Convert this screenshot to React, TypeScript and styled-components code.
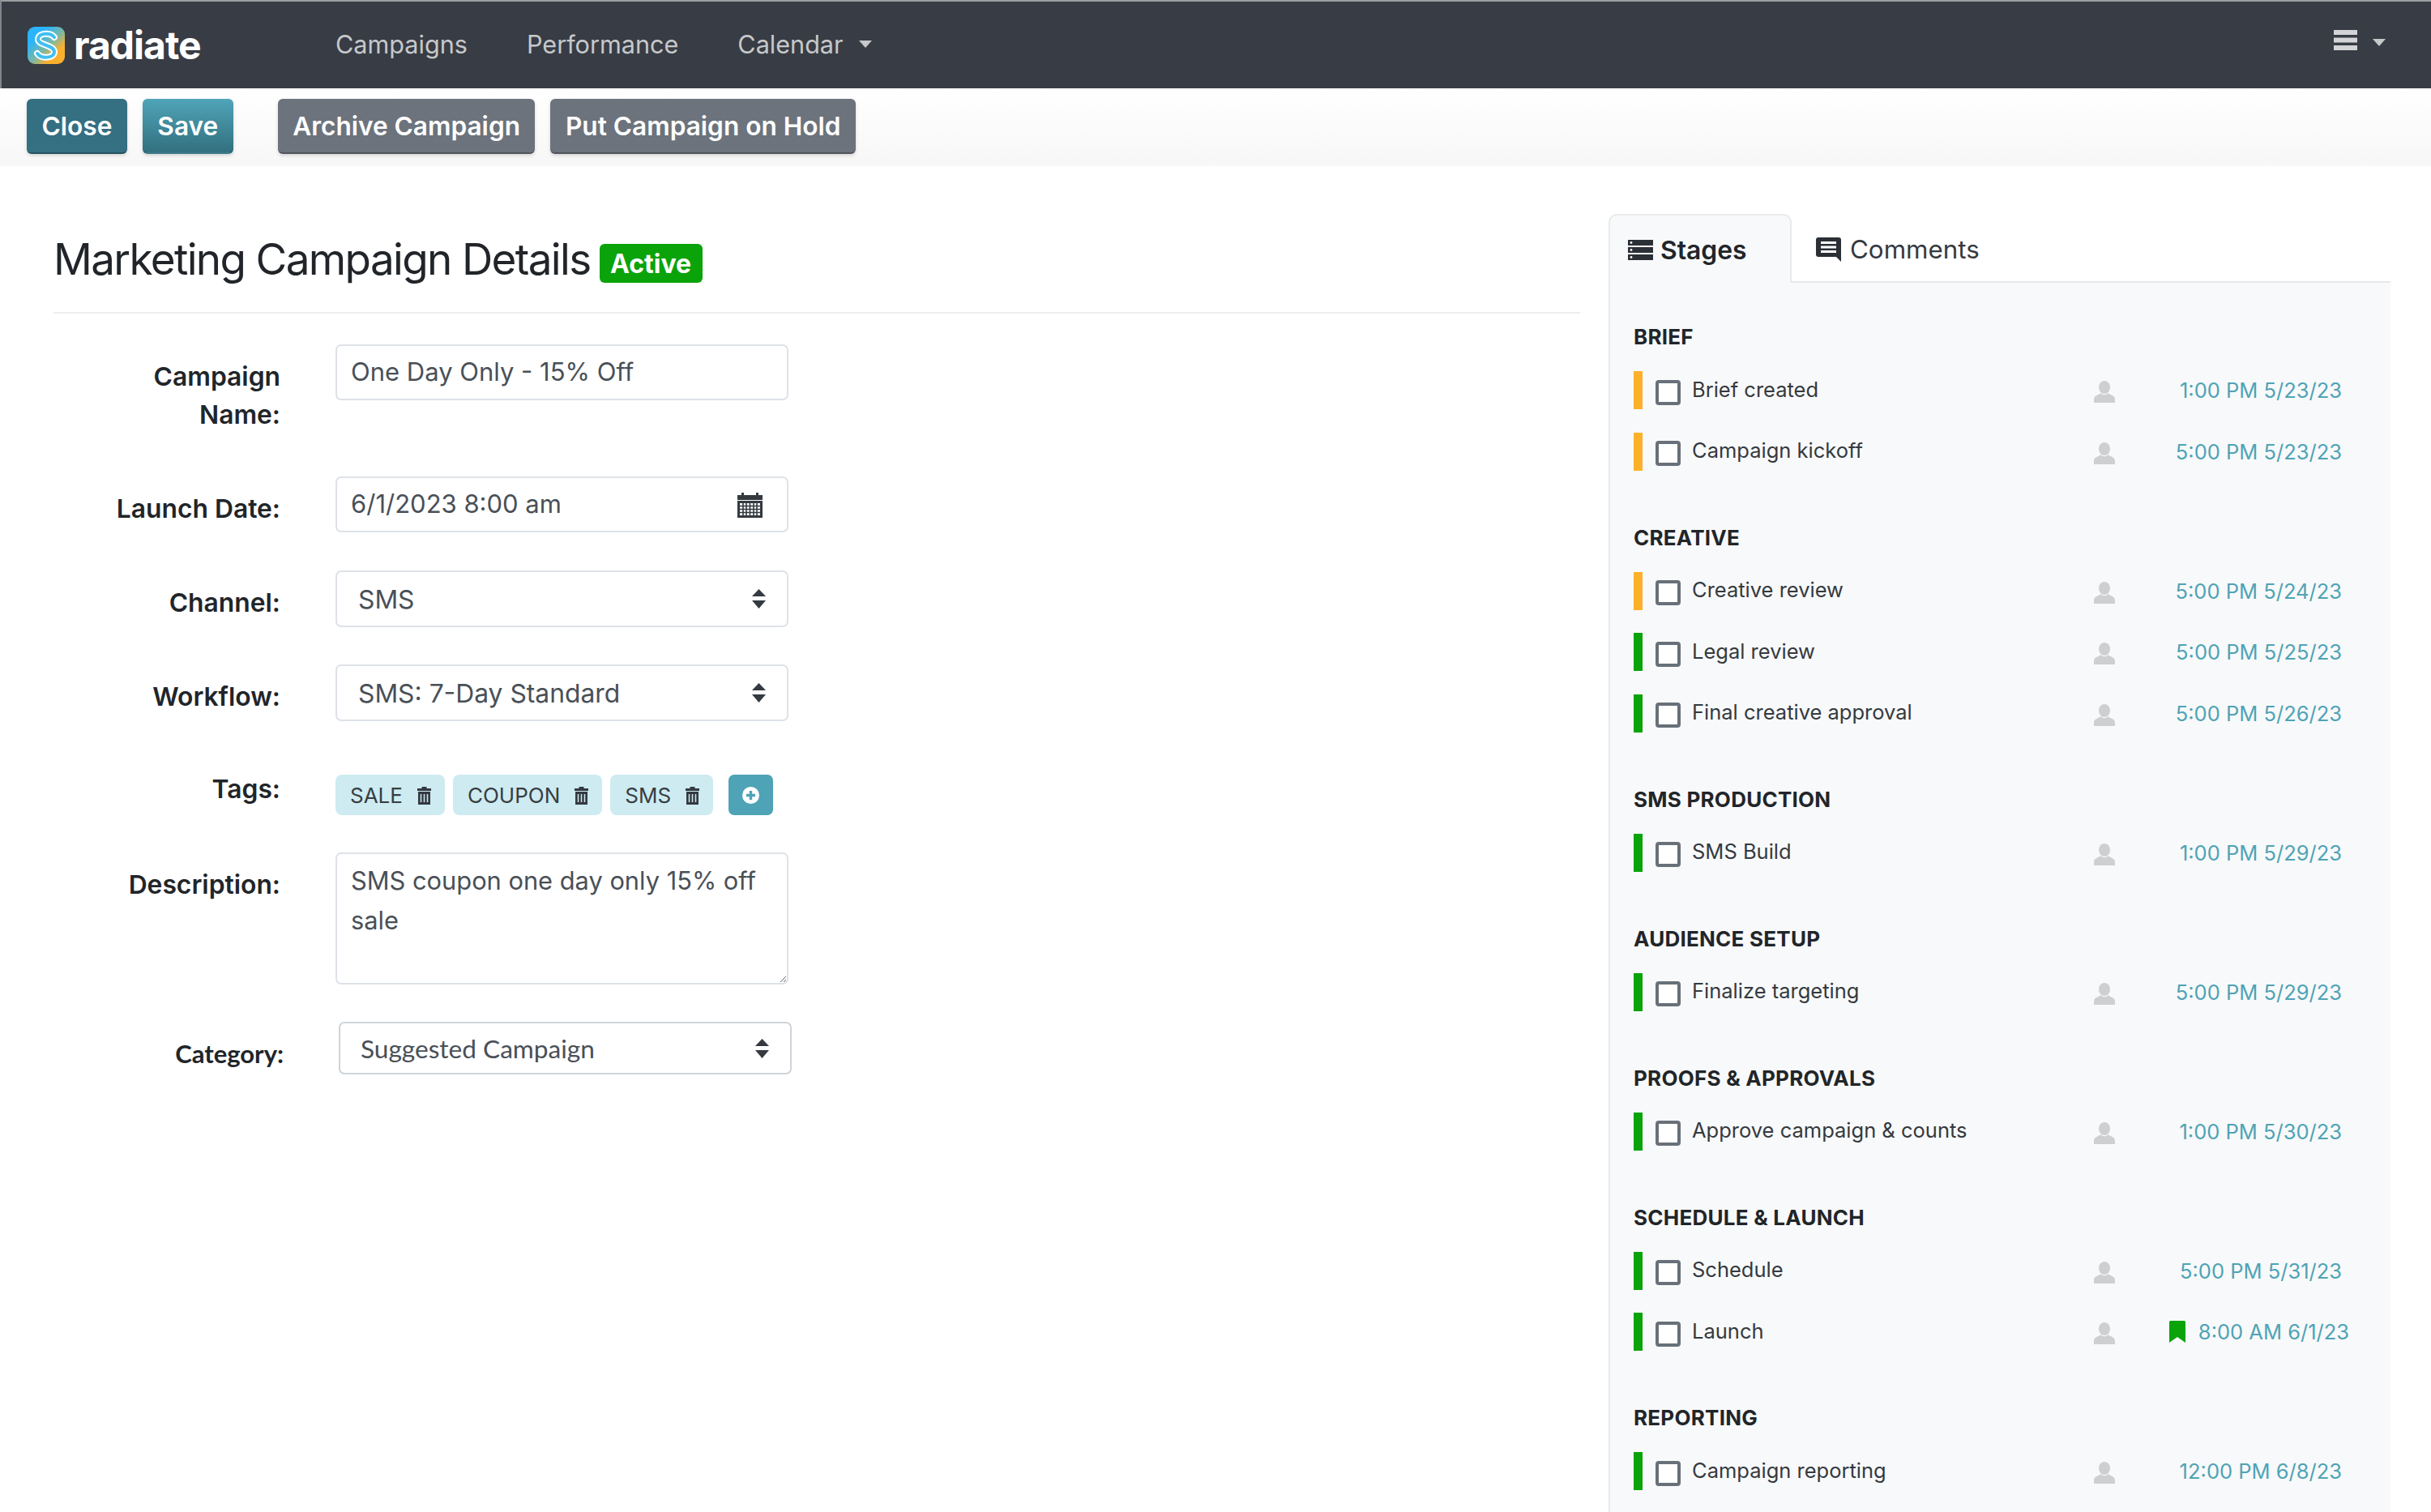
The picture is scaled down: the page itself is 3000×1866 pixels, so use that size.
import React from 'react';
import styled, { createGlobalStyle } from 'styled-components';

const FONT = `Inter, "Liberation Sans", sans-serif`;

const GlobalStyle = createGlobalStyle`
  html, body {
    margin: 0;
    padding: 0;
    height: 1866px;
    overflow: hidden;
    background: #fff;
    font-family: ${FONT};
    color: #212529;
  }
  * { box-sizing: border-box; }
`;

const Page = styled.div`
  width: 3000px;
  height: 1866px;
  display: flex;
  flex-direction: column;
  overflow: hidden;
`;

// top nav
const Navbar = styled.nav`
  height: 109px;
  flex: none;
  display: flex;
  align-items: center;
  background: #383c44;
  border-top: 2px solid #9a9da1;
  border-left: 2px solid #80848a;
  padding-left: 32px;
  padding-right: 56px;
`;

const Brand = styled.div`
  width: 380px;
  display: flex;
  align-items: center;
  gap: 11px;
  color: #fff;
  font-size: 48px;
  font-weight: 700;
  letter-spacing: -1px;
  line-height: 46px;
`;

const NavLinks = styled.div`
  display: flex;
  gap: 73px;
  flex: 1;
  margin-top: -2px;
`;

const NavLink = styled.a`
  color: #c6c8ca;
  font-size: 30.6px;
  display: flex;
  align-items: center;
  gap: 19px;
`;

const Caret = styled.span`
  width: 0;
  height: 0;
  border-left: 8.5px solid transparent;
  border-right: 8.5px solid transparent;
  border-top: 9px solid #c6c8ca;
`;

const NavMenu = styled.div`
  display: flex;
  align-items: center;
  gap: 19px;
  margin-top: -6px;

  svg {
    margin-top: -7px;
  }
`;

// action bar
const Toolbar = styled.div`
  height: 96px;
  flex: none;
  display: flex;
  gap: 19px;
  padding: 13px 33px 15px;
  background: linear-gradient(#ffffff, #f7f7f7);
`;

const Button = styled.button<{ $tone: 'dark' | 'teal' | 'gray'; $split?: boolean }>`
  height: 68px;
  padding: 0 18.5px;
  margin-left: ${p => (p.$split ? '36px' : '0')};
  border: none;
  border-bottom: 2px solid rgba(0, 0, 0, 0.25);
  border-radius: 6px;
  color: #fff;
  font-family: ${FONT};
  font-size: 31.6px;
  font-weight: 600;
  box-shadow: 0 2px 4px rgba(0, 0, 0, 0.15);
  background: ${p =>
    p.$tone === 'dark' ? '#346f82' : p.$tone === 'teal' ? 'linear-gradient(#50a4b8, #32707f)' : '#6c737c'};
`;

const Main = styled.main`
  flex: 1;
  display: flex;
  gap: 35px;
  padding-left: 66px;
  min-height: 0;
`;

const Details = styled.section`
  width: 1884px;
  flex: none;
  padding-top: 85px;
`;

const TitleRow = styled.div`
  height: 97px;
  padding-bottom: 33px;
  display: flex;
  align-items: center;
  border-bottom: 2px solid #eceef0;
  margin-bottom: 38px;
`;

const Title = styled.h1`
  margin: -2px 0 0;
  font-size: 53px;
  font-weight: 400;
  letter-spacing: -1.65px;
  color: #212529;
`;

const ActiveBadge = styled.span`
  margin-left: 11px;
  margin-top: 8px;
  width: 127px;
  height: 48px;
  display: flex;
  align-items: center;
  justify-content: center;
  border-radius: 6px;
  background: #0aa30a;
  color: #fff;
  font-size: 32px;
  font-weight: 700;
`;

// form
const FormRow = styled.div<{ $shift?: boolean; $tags?: boolean }>`
  display: grid;
  grid-template-columns: 280px 559px;
  column-gap: 68px;
  margin-top: ${p => (p.$tags ? '66px' : '0')};
  margin-bottom: 46px;
  margin-left: ${p => (p.$shift ? '4px' : '0')};
  align-items: start;
`;

const Label = styled.label<{ $tight?: boolean; $alt?: boolean }>`
  text-align: right;
  font-family: ${p => (p.$alt ? 'Lato, sans-serif' : FONT)};
  font-size: ${p => (p.$alt ? '31px' : '31.8px')};
  font-weight: ${p => (p.$alt ? 700 : 600)};
  line-height: ${p => (p.$tight ? '36px' : '47px')};
  color: #212529;
  padding: ${p => (p.$tight ? '0 0 0 60px' : '16px 0 7px 60px')};
`;

const FieldWrap = styled.div`
  position: relative;
`;

const TextInput = styled.input`
  display: block;
  width: 100%;
  height: 69px;
  padding: 0 17px 2px;
  border: 2px solid #dee2e8;
  border-radius: 7px;
  font-family: ${FONT};
  font-size: 31px;
  color: #495057;
  background: #fff;
  outline: none;
`;

const SelectField = styled.select<{ $alt?: boolean }>`
  display: block;
  width: 100%;
  height: ${p => (p.$alt ? '65px' : '70px')};
  padding: 0 0 0 ${p => (p.$alt ? '25px' : '26px')};
  appearance: none;
  border: 2px solid ${p => (p.$alt ? '#ced4da' : '#dee2e8')};
  border-radius: 7px;
  font-family: ${p => (p.$alt ? 'Lato, sans-serif' : FONT)};
  font-size: ${p => (p.$alt ? '31.6px' : '31.8px')};
  color: #495057;
  background: #fff;
  outline: none;
`;

const TextArea = styled.textarea`
  display: block;
  width: 100%;
  height: 163px;
  padding: 8px 17px;
  border: 2px solid #dee2e8;
  border-radius: 7px;
  font-family: ${FONT};
  font-size: 30.8px;
  line-height: 49px;
  color: #495057;
  background: #fff;
  outline: none;
  resize: vertical;
`;

const FieldIcon = styled.span<{ $right: number }>`
  position: absolute;
  top: 50%;
  right: ${p => p.$right}px;
  transform: translateY(-50%);
  display: flex;
`;

const TagList = styled.div`
  display: flex;
  align-items: center;
  gap: 10px;
`;

const Tag = styled.span`
  height: 50px;
  padding: 0 17px 0 18px;
  display: flex;
  align-items: center;
  gap: 18px;
  background: #cdebf1;
  border-radius: 8px;
  color: #383d41;
  font-size: 26px;
`;

const AddTag = styled.button`
  width: 55px;
  height: 50px;
  margin-left: 9px;
  padding: 0;
  display: flex;
  align-items: center;
  justify-content: center;
  border: none;
  border-radius: 7px;
  background: #4fa3b6;
`;

// right panel
const StagesColumn = styled.aside`
  width: 965px;
  flex: none;
  padding-top: 59px;
  display: flex;
  flex-direction: column;
`;

const Tabs = styled.div`
  display: flex;
  height: 85px;
  flex: none;
  border-bottom: 2px solid #e6e8ea;
`;

const Tab = styled.div<{ $active?: boolean }>`
  height: 85px;
  display: flex;
  align-items: center;
  gap: ${p => (p.$active ? '9px' : '11px')};
  padding-top: 2px;
  font-size: ${p => (p.$active ? '31.8px' : '31.3px')};
  font-weight: ${p => (p.$active ? 600 : 400)};
  color: ${p => (p.$active ? '#212529' : '#343a40')};
  width: ${p => (p.$active ? '226px' : 'auto')};
  padding-left: ${p => (p.$active ? '22px' : '30px')};
  background: ${p => (p.$active ? '#f8f9fa' : 'transparent')};
  border: ${p => (p.$active ? '2px solid #e8eaec' : 'none')};
  border-bottom: none;
  border-radius: 10px 10px 0 0;
  margin-bottom: -2px;
`;

const Panel = styled.div`
  flex: 1;
  background: #f8f9fa;
  border-left: 2px solid #e6e8ea;
  padding: 49px 60px 0 29px;
`;

const StageGroup = styled.div`
  margin-bottom: 65px;
`;

const GroupTitle = styled.h3`
  margin: 0 0 24px;
  height: 36px;
  line-height: 36px;
  font-size: 26px;
  font-weight: 700;
  letter-spacing: 0.25px;
  color: #212529;
`;

const StageRow = styled.div`
  display: flex;
  align-items: center;
  height: 47px;
  margin-bottom: 28.6px;
`;

const StatusBar = styled.span<{ $state: 'warn' | 'ok' }>`
  width: 11px;
  height: 47px;
  flex: none;
  background: ${p => (p.$state === 'warn' ? '#fdb12b' : '#0aa30a')};
`;

const Check = styled.input`
  appearance: none;
  width: 31px;
  height: 31px;
  flex: none;
  margin: 5px 14px 0 16px;
  border: 4px solid #687079;
  border-radius: 4px;
  background: #fff;
`;

const StageName = styled.span`
  flex: 1;
  font-size: 25.5px;
  color: #343a40;
  margin-top: -3px;
`;

const Owner = styled.span`
  display: flex;
  flex: none;
  margin-top: 4px;
`;

const Due = styled.span<{ $flag?: boolean }>`
  width: ${p => (p.$flag ? '289px' : '280px')};
  flex: none;
  display: flex;
  align-items: center;
  justify-content: flex-end;
  gap: 16px;
  margin-right: ${p => (p.$flag ? '-9px' : '0')};
  font-size: 25.5px;
  color: #4fa3b6;
`;

// drawn icons
const LogoMark = () => (
  <svg width="46" height="46" viewBox="0 0 46 46">
    <defs>
      <linearGradient id="logoFill" x1="0.1" y1="0.1" x2="0.9" y2="0.9">
        <stop offset="0.2" stopColor="#29b4fb" />
        <stop offset="0.55" stopColor="#7fb8a0" />
        <stop offset="0.8" stopColor="#fbb02d" />
      </linearGradient>
    </defs>
    <rect width="46" height="46" rx="9" fill="url(#logoFill)" />
    <path
      d="M33 13 C29 7 14 7 13 15 C12 23 33 22 33 31 C33 39 17 40 12 33"
      fill="none"
      stroke="#fff"
      strokeWidth="8"
      strokeLinecap="round"
    />
    <path
      d="M33 13 C29 7 14 7 13 15 C12 23 33 22 33 31 C33 39 17 40 12 33"
      fill="none"
      stroke="#3fc0f2"
      strokeWidth="4"
      strokeLinecap="round"
    />
  </svg>
);

const BarsIcon = () => (
  <svg width="29" height="25" viewBox="0 0 29 25" fill="#d2d4d6">
    <rect y="0" width="29" height="6" />
    <rect y="9.5" width="29" height="6" />
    <rect y="19" width="29" height="6" />
  </svg>
);

const CalendarIcon = () => (
  <svg width="31" height="32" viewBox="0 0 31 32">
    <path d="M0 4h5V1h3v3h15V1h3v3h5v6H0z" fill="#343a40" />
    <path d="M0 11h31v21H0z" fill="#343a40" />
    <path d="M3 14h25v15H3z" fill="#fff" />
    <path
      d="M3 17.5h25M3 21.5h25M3 25.5h25M7 14v15M11 14v15M15.5 14v15M20 14v15M24 14v15"
      stroke="#343a40"
      strokeWidth="1.6"
    />
  </svg>
);

const SortArrows = () => (
  <svg width="17" height="24" viewBox="0 0 17 24" fill="#343a40">
    <path d="M8.5 0 L17 9 H0 Z" />
    <path d="M8.5 24 L0 14 H17 Z" />
  </svg>
);

const TrashIcon = () => (
  <svg width="17" height="23" viewBox="0 0 17 23">
    <path d="M5.5 3V1h6v2h5.5v3H0V3z" fill="#343a40" />
    <path d="M1 7h15v16H1z" fill="#343a40" />
    <path d="M4.5 10v10M8.5 10v10M12.5 10v10" stroke="#cdebf1" strokeWidth="1.5" />
  </svg>
);

const PlusCircle = () => (
  <svg width="21" height="21" viewBox="0 0 21 21">
    <circle cx="10.5" cy="10.5" r="10.5" fill="#fff" />
    <path d="M10.5 5v11M5 10.5h11" stroke="#4fa3b6" strokeWidth="3.4" />
  </svg>
);

const StagesIcon = () => (
  <svg width="31" height="25" viewBox="0 0 31 25">
    <rect y="0" width="31" height="7" fill="#2b3036" />
    <rect y="9" width="31" height="7" fill="#2b3036" />
    <rect y="18" width="31" height="7" fill="#2b3036" />
    <circle cx="4" cy="3.5" r="1.4" fill="#f8f9fa" />
    <circle cx="4" cy="12.5" r="1.4" fill="#f8f9fa" />
    <circle cx="4" cy="21.5" r="1.4" fill="#f8f9fa" />
  </svg>
);

const CommentIcon = () => (
  <svg width="31" height="30" viewBox="0 0 31 30">
    <path d="M3 0h25a3 3 0 0 1 3 3v27l-6-6H3a3 3 0 0 1-3-3V3a3 3 0 0 1 3-3z" fill="#2b3036" />
    <path d="M6 6.5h19M6 12h19M6 17.5h19" stroke="#fff" strokeWidth="3" />
  </svg>
);

const PersonIcon = () => (
  <svg width="26" height="27" viewBox="0 0 26 27" fill="#cdcfd0">
    <ellipse cx="13" cy="8" rx="7" ry="8" />
    <path d="M9 15 C9 18 17 18 17 15 C21 18 26 18 26 23 V27 H0 V23 C0 18 5 18 9 15 Z" />
  </svg>
);

const FlagIcon = () => (
  <svg width="20" height="27" viewBox="0 0 20 27">
    <path d="M1.5 0h17A1.5 1.5 0 0 1 20 1.5V27l-10-7L0 27V1.5A1.5 1.5 0 0 1 1.5 0z" fill="#0aa30a" />
  </svg>
);

type Stage = { name: string; state: 'warn' | 'ok'; due: string; flag?: boolean };

const STAGE_GROUPS: { title: string; stages: Stage[] }[] = [
  {
    title: 'BRIEF',
    stages: [
      { name: 'Brief created', state: 'warn', due: '1:00 PM 5/23/23' },
      { name: 'Campaign kickoff', state: 'warn', due: '5:00 PM 5/23/23' },
    ],
  },
  {
    title: 'CREATIVE',
    stages: [
      { name: 'Creative review', state: 'warn', due: '5:00 PM 5/24/23' },
      { name: 'Legal review', state: 'ok', due: '5:00 PM 5/25/23' },
      { name: 'Final creative approval', state: 'ok', due: '5:00 PM 5/26/23' },
    ],
  },
  { title: 'SMS PRODUCTION', stages: [{ name: 'SMS Build', state: 'ok', due: '1:00 PM 5/29/23' }] },
  { title: 'AUDIENCE SETUP', stages: [{ name: 'Finalize targeting', state: 'ok', due: '5:00 PM 5/29/23' }] },
  {
    title: 'PROOFS & APPROVALS',
    stages: [{ name: 'Approve campaign & counts', state: 'ok', due: '1:00 PM 5/30/23' }],
  },
  {
    title: 'SCHEDULE & LAUNCH',
    stages: [
      { name: 'Schedule', state: 'ok', due: '5:00 PM 5/31/23' },
      { name: 'Launch', state: 'ok', due: '8:00 AM 6/1/23', flag: true },
    ],
  },
  { title: 'REPORTING', stages: [{ name: 'Campaign reporting', state: 'ok', due: '12:00 PM 6/8/23' }] },
];

const TAGS = ['SALE', 'COUPON', 'SMS'];

const App: React.FC = () => {
  return (
    <Page>
      <GlobalStyle />
      <Navbar>
        <Brand>
          <LogoMark />
          radiate
        </Brand>
        <NavLinks>
          <NavLink>Campaigns</NavLink>
          <NavLink>Performance</NavLink>
          <NavLink>
            Calendar
            <Caret />
          </NavLink>
        </NavLinks>
        <NavMenu>
          <BarsIcon />
          <Caret />
        </NavMenu>
      </Navbar>

      <Toolbar>
        <Button $tone="dark">Close</Button>
        <Button $tone="teal">Save</Button>
        <Button $tone="gray" $split>
          Archive Campaign
        </Button>
        <Button $tone="gray">Put Campaign on Hold</Button>
      </Toolbar>

      <Main>
        <Details>
          <TitleRow>
            <Title>Marketing Campaign Details</Title>
            <ActiveBadge>Active</ActiveBadge>
          </TitleRow>

          <FormRow>
            <Label>Campaign Name:</Label>
            <TextInput defaultValue="One Day Only - 15% Off" />
          </FormRow>
          <FormRow>
            <Label>Launch Date:</Label>
            <FieldWrap>
              <TextInput defaultValue="6/1/2023 8:00 am" />
              <FieldIcon $right={32}>
                <CalendarIcon />
              </FieldIcon>
            </FieldWrap>
          </FormRow>
          <FormRow>
            <Label>Channel:</Label>
            <FieldWrap>
              <SelectField defaultValue="SMS">
                <option>SMS</option>
              </SelectField>
              <FieldIcon $right={28}>
                <SortArrows />
              </FieldIcon>
            </FieldWrap>
          </FormRow>
          <FormRow>
            <Label>Workflow:</Label>
            <FieldWrap>
              <SelectField defaultValue="SMS: 7-Day Standard">
                <option>SMS: 7-Day Standard</option>
              </SelectField>
              <FieldIcon $right={28}>
                <SortArrows />
              </FieldIcon>
            </FieldWrap>
          </FormRow>
          <FormRow $tags>
            <Label $tight>Tags:</Label>
            <TagList>
              {TAGS.map(tag => (
                <Tag key={tag}>
                  {tag}
                  <TrashIcon />
                </Tag>
              ))}
              <AddTag>
                <PlusCircle />
              </AddTag>
            </TagList>
          </FormRow>
          <FormRow>
            <Label>Description:</Label>
            <TextArea defaultValue="SMS coupon one day only 15% off sale" />
          </FormRow>
          <FormRow $shift>
            <Label $alt>Category:</Label>
            <FieldWrap>
              <SelectField $alt defaultValue="Suggested Campaign">
                <option>Suggested Campaign</option>
              </SelectField>
              <FieldIcon $right={28}>
                <SortArrows />
              </FieldIcon>
            </FieldWrap>
          </FormRow>
        </Details>

        <StagesColumn>
          <Tabs>
            <Tab $active>
              <StagesIcon />
              Stages
            </Tab>
            <Tab>
              <CommentIcon />
              Comments
            </Tab>
          </Tabs>
          <Panel>
            {STAGE_GROUPS.map(group => (
              <StageGroup key={group.title}>
                <GroupTitle>{group.title}</GroupTitle>
                {group.stages.map(stage => (
                  <StageRow key={stage.name}>
                    <StatusBar $state={stage.state} />
                    <Check type="checkbox" />
                    <StageName>{stage.name}</StageName>
                    <Owner>
                      <PersonIcon />
                    </Owner>
                    <Due $flag={stage.flag}>
                      {stage.flag && <FlagIcon />}
                      {stage.due}
                    </Due>
                  </StageRow>
                ))}
              </StageGroup>
            ))}
          </Panel>
        </StagesColumn>
      </Main>
    </Page>
  );
};

export default App;
